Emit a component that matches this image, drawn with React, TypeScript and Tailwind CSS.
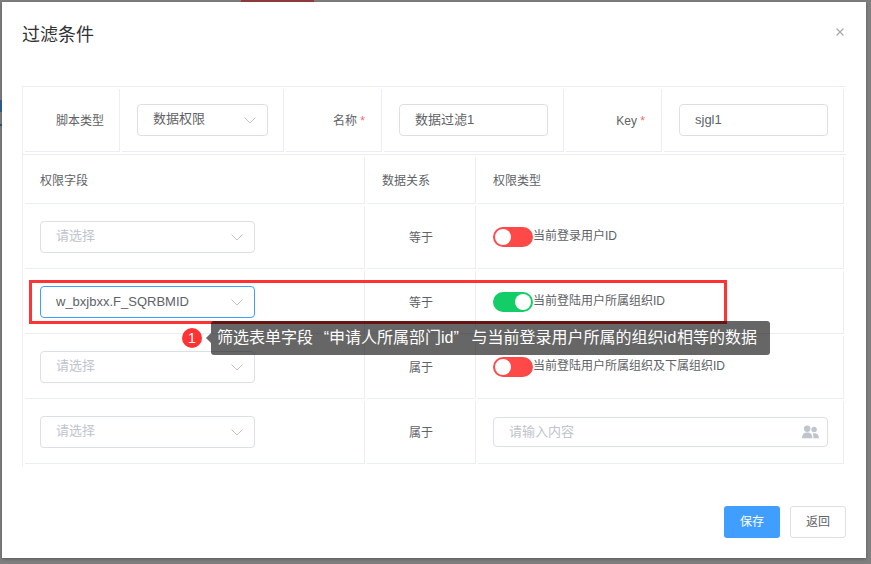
const cellClass = 'border-r border-b border-[#ebeef5] align-middle';
const boxClass = 'flex items-center rounded-[4px] border bg-white pl-[15px] text-[13px]';

function Chevron() {
  return (
    <svg width="12" height="7" viewBox="0 0 12 7" fill="none" className="shrink-0">
      <path d="M0.5 0.5L6 6L11.5 0.5" stroke="#c0c4cc" strokeWidth="1" />
    </svg>
  );
}

function SelectBox({
  value,
  placeholder,
  focused,
  className,
}: {
  value?: string;
  placeholder?: string;
  focused?: boolean;
  className: string;
}) {
  return (
    <div
      className={`${boxClass} h-8 justify-between pr-[11px] ${className} ${
        focused ? 'border-[#409eff]' : 'border-[#dcdfe6]'
      }`}
    >
      <span
        className={`${value ? 'text-[#606266]' : 'text-[#c0c4cc]'} ${
          focused ? '' : '-translate-y-px'
        }`}
      >
        {value ?? placeholder}
      </span>
      <Chevron />
    </div>
  );
}

function Switch({ on }: { on: boolean }) {
  return (
    <span
      className={`flex h-5 w-10 shrink-0 items-center rounded-full px-[2px] ${
        on ? 'justify-end bg-[#13ce66]' : 'justify-start bg-[#ff4949]'
      }`}
    >
      <span className="size-4 rounded-full bg-white" />
    </span>
  );
}

function SwitchCell({ on, label }: { on: boolean; label: string }) {
  return (
    <div className="flex items-center text-xs text-[#606266]">
      <Switch on={on} />
      <span className="-translate-y-px">{label}</span>
    </div>
  );
}

function UsersIcon() {
  return (
    <svg width="17" height="14" viewBox="0 0 18 14" fill="#c0c4cc" className="shrink-0">
      <circle cx="5.5" cy="3.5" r="3.4" />
      <circle cx="12.8" cy="4.4" r="2.9" />
      <path d="M0 13.5C0 9.5 2.4 7.6 5.5 7.6S11 9.5 11 13.5Z" />
      <path d="M12 13.5H18C18 10.4 16 8.4 13 8.4C12.4 8.4 11.9 8.5 11.4 8.7C12 9.9 12.2 11.6 12 13.5Z" />
    </svg>
  );
}

function Label({ text, required }: { text: string; required?: boolean }) {
  return (
    <td
      className={`${cellClass} pt-[2px] text-right text-xs text-[#606266] ${
        required ? 'pr-4' : 'pr-[15px]'
      }`}
    >
      {text}
      {required && <span className="text-[#f56c6c]"> *</span>}
    </td>
  );
}

function InputBox({ value }: { value: string }) {
  return <div className={`${boxClass} h-8 w-[149px] border-[#dcdfe6] text-[#606266]`}>{value}</div>;
}

const rows = [
  {
    relation: '等于',
    type: <SwitchCell on={false} label="当前登录用户ID" />,
    field: <SelectBox placeholder="请选择" className="w-[215px]" />,
  },
  {
    relation: '等于',
    type: <SwitchCell on label="当前登陆用户所属组织ID" />,
    field: <SelectBox value="w_bxjbxx.F_SQRBMID" focused className="w-[215px]" />,
  },
  {
    relation: '属于',
    type: <SwitchCell on={false} label="当前登陆用户所属组织及下属组织ID" />,
    field: <SelectBox placeholder="请选择" className="w-[215px]" />,
  },
  {
    relation: '属于',
    type: (
      <div
        className={`${boxClass} h-[30px] w-[335px] justify-between border-[#dcdfe6] pr-2 text-[#c0c4cc]`}
      >
        请输入内容
        <UsersIcon />
      </div>
    ),
    field: <SelectBox placeholder="请选择" className="w-[215px]" />,
  },
];

export default function App() {
  return (
    <div className='relative h-[564px] w-[871px] overflow-hidden bg-[#7f7f7f] pt-[2px] pl-[2px] font-["Liberation_Sans","Noto_Sans_CJK_SC",sans-serif]'>
      {/* bits of the page behind the mask */}
      <div className="absolute top-0 left-[241px] h-[2px] w-[73px] bg-[#8f3a3a]" />
      <div className="absolute top-[100px] left-0 h-[12px] w-[2px] bg-[#2f5a86]" />
      <div className="absolute top-[124px] left-0 h-[2px] w-[2px] bg-[#1f4f86]" />

      <div className="flex h-[556px] w-[864px] flex-col bg-white shadow-[0_1px_3px_rgba(0,0,0,0.3)]">
        <header className="flex h-[84px] shrink-0 items-start justify-between pt-[21px] pr-[22px] pl-5">
          <h1 className="text-[18px] leading-6 text-[#303133]">过滤条件</h1>
          <svg width="8" height="8" viewBox="0 0 8 8" fill="none" className="mt-[5px]">
            <path d="M0.5 0.5L7.5 7.5M7.5 0.5L0.5 7.5" stroke="#a6a9ad" strokeWidth="1.2" />
          </svg>
        </header>

        <div className="ml-5 w-[824px]">
          <table className="w-full table-fixed border-separate border-spacing-[2px] border-t border-l border-[#ebeef5]">
            <colgroup>
              <col className="w-[95px]" />
              <col className="w-[162px]" />
              <col className="w-[96px]" />
              <col className="w-[180px]" />
              <col className="w-[96px]" />
              <col className="w-[180px]" />
            </colgroup>
            <tbody>
              <tr className="h-[63px]">
                <Label text="脚本类型" />
                <td className={`${cellClass} pl-[15px]`}>
                  <SelectBox value="数据权限" className="w-[131px]" />
                </td>
                <Label text="名称" required />
                <td className={`${cellClass} pl-[15px]`}>
                  <InputBox value="数据过滤1" />
                </td>
                <Label text="Key" required />
                <td className={`${cellClass} pl-[15px]`}>
                  <InputBox value="sjgl1" />
                </td>
              </tr>
            </tbody>
          </table>

          <table className="w-full table-fixed border-separate border-spacing-[2px] border-t border-l border-[#ebeef5]">
            <colgroup>
              <col className="w-[340px]" />
              <col className="w-[109px]" />
              <col className="w-[366px]" />
            </colgroup>
            <thead>
              <tr className="h-[47px] text-left text-xs text-[#606266]">
                <th className={`${cellClass} pt-[2px] pl-[15px] font-normal`}>权限字段</th>
                <th className={`${cellClass} pt-[2px] pl-[15px] font-normal`}>数据关系</th>
                <th className={`${cellClass} pt-[2px] pl-[15px] font-normal`}>权限类型</th>
              </tr>
            </thead>
            <tbody>
              {rows.map((row, i) => (
                <tr key={i} className="h-[63px]">
                  <td className={`${cellClass} pl-[15px]`}>{row.field}</td>
                  <td className={`${cellClass} pt-[2px] text-center text-xs text-[#606266]`}>
                    {row.relation}
                  </td>
                  <td className={`${cellClass} pl-[15px]`}>{row.type}</td>
                </tr>
              ))}
            </tbody>
          </table>
        </div>

        <footer className="mt-auto flex justify-end gap-[10px] pr-5 pb-5">
          <button className="h-8 w-14 rounded-[3px] bg-[#409eff] text-xs text-white">保存</button>
          <button className="h-8 w-14 rounded-[3px] border border-[#dcdfe6] bg-white text-xs text-[#606266]">
            返回
          </button>
        </footer>
      </div>

      {/* annotation overlay */}
      <div className="absolute top-[280px] left-[29px] h-[44px] w-[698px] border-[3px] border-[#ff3333]" />
      <div className="absolute top-[328px] left-[182px] flex size-5 items-center justify-center rounded-full bg-[#ff3333] text-sm text-white">
        1
      </div>
      <div className="absolute top-[333px] left-[206px] h-0 w-0 border-y-[5px] border-r-[5px] border-y-transparent border-r-black/60" />
      <div className="absolute top-[321px] left-[211px] flex h-[34px] w-[559px] items-center rounded-[3px] bg-black/60 pl-[6px] text-[16px] whitespace-pre text-white">
        <span>
          筛选表单字段
          <span className="inline-block w-4 text-right">“</span>
          申请人所属部门id
          <span className="inline-block w-[18px] text-left">”</span>
          与当前登录用户所属的组织
          <span className="tracking-[0.5px]">id</span>
          相等的数据
        </span>
      </div>
    </div>
  );
}
